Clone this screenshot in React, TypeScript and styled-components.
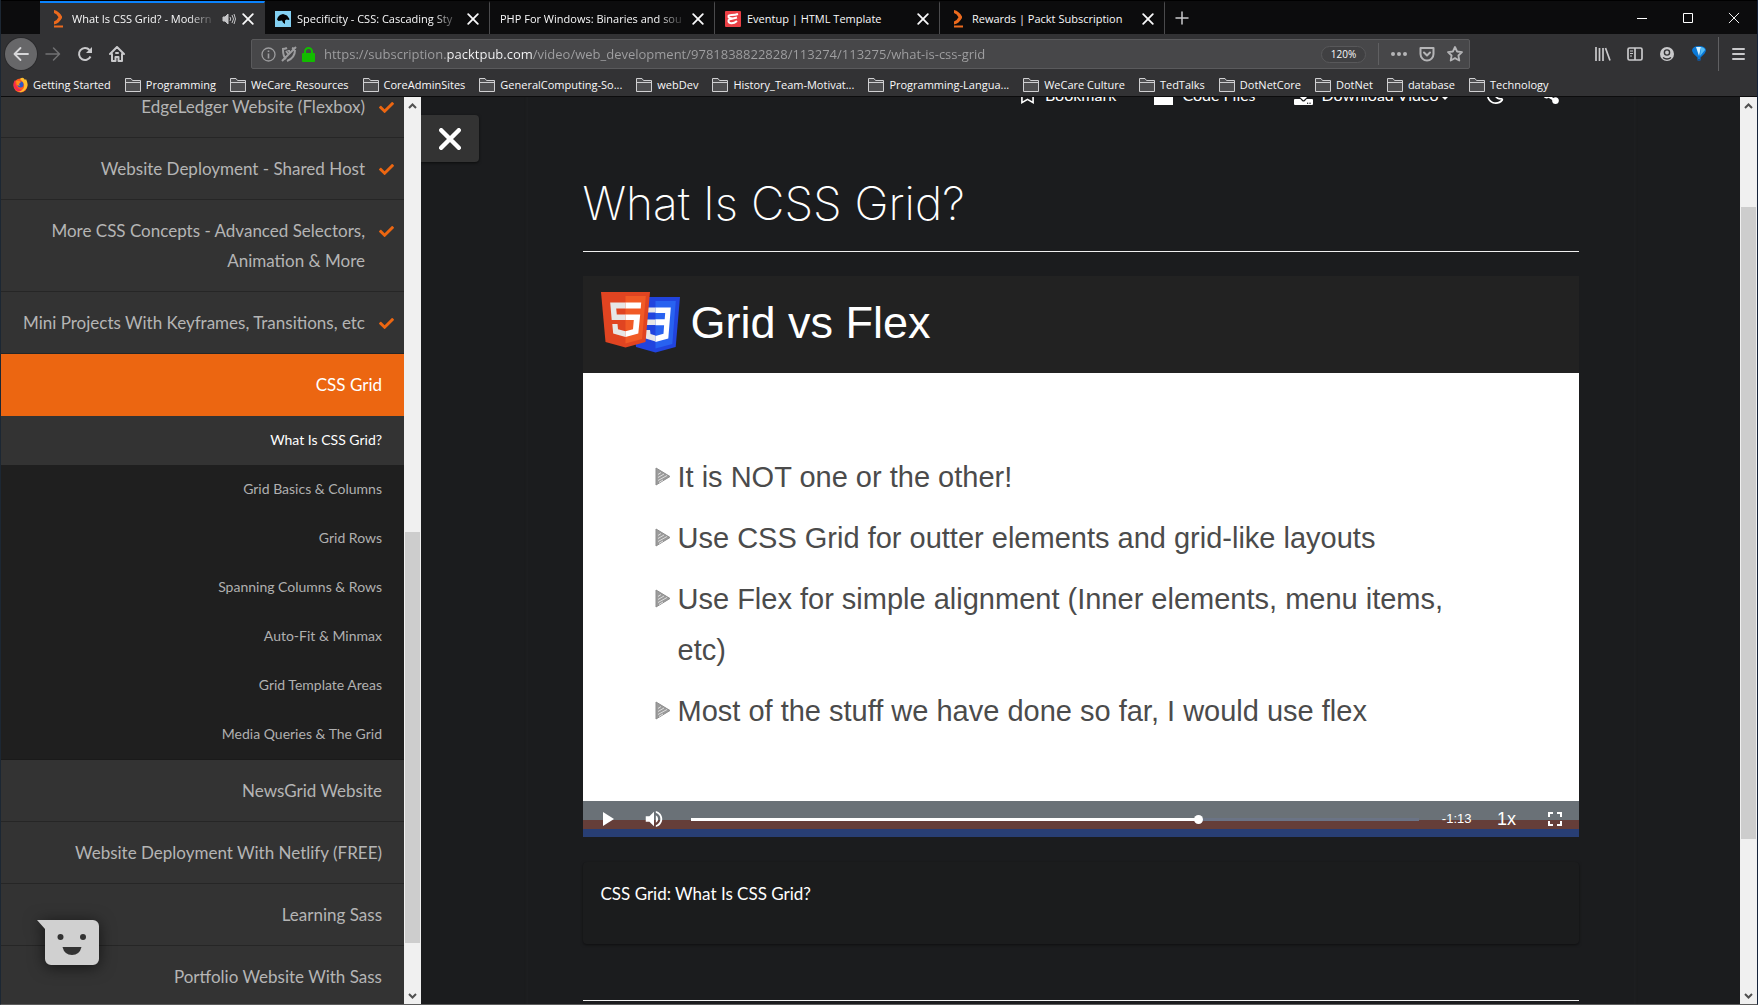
import React from "react";
import styled, { createGlobalStyle, css } from "styled-components";
import { FaCheck, FaDownload, FaRegBookmark, FaRegMoon, FaShareAlt } from "react-icons/fa";
import { MdFullscreen, MdPlayArrow, MdVolumeUp } from "react-icons/md";

const ui = `"Open Sans", "Noto Sans", sans-serif`;
const lato = `Lato, "Open Sans", sans-serif`;
const slideFont = `"Liberation Sans", Arial, sans-serif`;

const GlobalStyle = createGlobalStyle`
  *, *::before, *::after { box-sizing: border-box; }
  body { margin: 0; background: #1b1c1e; overflow: hidden; }
  button { border: 0; padding: 0; background: none; color: inherit; font: inherit; cursor: pointer; }
  a { color: inherit; text-decoration: none; }
  svg { display: block; flex: none; }
  ul, ol { list-style: none; margin: 0; padding: 0; }
`;

const Window = styled.div`
  height: 100vh;
  display: flex;
  flex-direction: column;
  overflow: hidden;
  border-left: 1px solid #1c2733;
  border-right: 1px solid #16233a;
  border-bottom: 1px solid #5c5c5c;
  font-family: ${ui};
`;

/* ---------- browser chrome ---------- */

const Chrome = styled.header`
  flex: none;
  background: #323234;
  color: #f9f9fa;
  border-bottom: 1px solid #0c0c0d;
`;

const TabStrip = styled.div`
  display: flex;
  height: 34px;
  padding-left: 39px;
  background: #0c0c0d;
  border-top: 1px solid #000;
`;

const Tab = styled.div<{ $active?: boolean }>`
  flex: 0 1 225px;
  min-width: 0;
  display: flex;
  align-items: center;
  gap: 6px;
  padding: 0 10px;
  border-top: 2px solid ${(p) => (p.$active ? "#0a84ff" : "transparent")};
  border-right: 1px solid ${(p) => (p.$active ? "transparent" : "#4a4a4c")};
  background: ${(p) => (p.$active ? "#323234" : "transparent")};
`;

const TabTitle = styled.span<{ $fade?: boolean }>`
  flex: 1;
  min-width: 0;
  overflow: hidden;
  white-space: nowrap;
  font-size: 11px;
  line-height: 16px;
  ${(p) =>
    p.$fade &&
    css`
      mask-image: linear-gradient(90deg, #000 calc(100% - 28px), transparent);
    `}
`;

const NewTab = styled.button`
  width: 34px;
  display: grid;
  place-items: center;
  color: #c9c9cb;
`;

const WindowButtons = styled.div`
  margin-left: auto;
  display: flex;
`;

const WindowButton = styled.button`
  width: 46px;
  display: grid;
  place-items: center;
  color: #fff;
`;

const NavBar = styled.div`
  display: flex;
  align-items: center;
  height: 40px;
  padding: 0 3px 0 4px;
  color: #bfbfc1;
`;

const BackButton = styled.button`
  width: 32px;
  height: 32px;
  display: grid;
  place-items: center;
  border-radius: 50%;
  background: #676769;
  color: #d7d7d9;
  box-shadow: 0 0 0 1px #2a2a2c;
`;

const NavButton = styled.button<{ $dim?: boolean }>`
  width: 32px;
  height: 32px;
  display: grid;
  place-items: center;
  color: ${(p) => (p.$dim ? "#717173" : "#c9c9cb")};
`;

const UrlBar = styled.div`
  flex: 1;
  min-width: 0;
  height: 30px;
  margin: 0 117px 0 118px;
  display: flex;
  align-items: center;
  padding: 0 0 0 9px;
  border: 1px solid #5a5a5c;
  border-radius: 2px;
  background: #474749;
`;

const UrlIcons = styled.span`
  display: flex;
  align-items: center;
  gap: 5px;
  color: #9c9c9e;
`;

const UrlInput = styled.input`
  flex: 1;
  min-width: 0;
  margin-left: 9px;
  padding: 0;
  border: 0;
  outline: 0;
  color: #a0a0a2;
  font-family: ${ui};
  font-size: 13px;
  line-height: 20px;
  background: linear-gradient(90deg, #a0a0a2 122px, #f9f9fa 122px 209px, #a0a0a2 209px);
  background-clip: text;
  -webkit-text-fill-color: transparent;
`;

const ZoomPill = styled.button`
  height: 17px;
  width: 45px;
  border: 1px solid #58585a;
  border-radius: 9px;
  background: #404042;
  color: #f9f9fa;
  font-size: 10px;
  line-height: 15px;
`;

const Divider = styled.span<{ $tall?: boolean }>`
  width: 1px;
  height: ${(p) => (p.$tall ? 34 : 22)}px;
  margin: ${(p) => (p.$tall ? "0 3px" : "0 6px 0 12px")};
  background: #606062;
`;

const UrlAction = styled.button`
  width: 28px;
  height: 28px;
  display: grid;
  place-items: center;
  color: #b5b5b7;
`;

const BookmarksBar = styled.ul`
  display: flex;
  align-items: center;
  gap: 14px;
  height: 22px;
  padding-left: 12px;
  white-space: nowrap;
`;

const BookmarkLink = styled.a`
  display: flex;
  align-items: center;
  gap: 5px;
  font-size: 11px;
  line-height: 16px;
`;

/* ---------- page ---------- */

const Page = styled.div`
  flex: 1;
  min-height: 0;
  display: flex;
  position: relative;
  background: #1b1c1e;
  font-family: ${lato};
`;

const Sidebar = styled.nav`
  flex: none;
  width: 403px;
  overflow: hidden;
  background: #333333;
`;

const Sections = styled.ul`
  margin-top: -21px;
`;

const Section = styled.a<{ $active?: boolean }>`
  display: flex;
  justify-content: flex-end;
  padding: 16px 10px 15px 10px;
  border-bottom: 1px solid ${(p) => (p.$active ? "#eb6611" : "#262626")};
  background: ${(p) => (p.$active ? "#ec6611" : "transparent")};
  color: ${(p) => (p.$active ? "#fff" : "#b5b5b5")};
  font-size: 17px;
  line-height: 30px;
  text-align: right;
`;

const SectionMark = styled.span<{ $done?: boolean }>`
  flex: none;
  width: ${(p) => (p.$done ? 29 : 12)}px;
  padding: 8px 0 0 ${(p) => (p.$done ? 14 : 0)}px;
  color: #ec6611;
`;

const Lessons = styled.ul`
  border-bottom: 1px solid #1a1a1a;
  background: #1f1f1f;
`;

const Lesson = styled.a<{ $active?: boolean }>`
  display: block;
  padding: 13px 22px 14px;
  background: ${(p) => (p.$active ? "#333333" : "transparent")};
  color: ${(p) => (p.$active ? "#fff" : "#b0b0b0")};
  font-size: 14px;
  line-height: 22px;
  text-align: right;
`;

const Scrollbar = styled.div`
  flex: none;
  width: 17px;
  display: flex;
  flex-direction: column;
  background: #f0f0f0;
`;

const ScrollButton = styled.button`
  height: 17px;
  display: grid;
  place-items: center;
  color: #505050;
`;

const ScrollSpace = styled.div<{ $share: number; $thumb?: boolean }>`
  flex: ${(p) => p.$share} 1 0;
  margin: 0 1px;
  background: ${(p) => (p.$thumb ? "#cdcdcd" : "transparent")};
`;

const Main = styled.main`
  flex: 1;
  min-width: 0;
  position: relative;
  overflow: hidden;
  color: #fff;
`;

const CloseButton = styled.button`
  position: absolute;
  left: 0;
  top: 18px;
  width: 58px;
  height: 47px;
  display: grid;
  place-items: center;
  border-radius: 0 4px 4px 0;
  background: #333333;
  box-shadow: 0 1px 3px rgba(0, 0, 0, 0.6);
`;

const Article = styled.article`
  max-width: 1106px;
  height: 1200px;
  margin: -18px auto 0;
  padding: 0 55px;
  box-shadow: 0 0 2px 1px #202123;
`;

const Actions = styled.div`
  display: flex;
  justify-content: flex-end;
  padding-right: 19px;
  font-size: 16px;
  line-height: 30px;
`;

const Action = styled.button<{ $gap: number }>`
  display: flex;
  align-items: center;
  gap: 9px;
  height: 32px;
  margin-left: ${(p) => p.$gap}px;
  line-height: 30px;
`;

const Caret = styled.span`
  margin: 6px 0 0 -6px;
  border: 3px solid transparent;
  border-top-color: #fff;
  border-bottom: 0;
`;

const Title = styled.h1`
  margin: 64px 0 20px;
  font-family: Inter, "Open Sans", sans-serif;
  font-size: 46px;
  font-weight: 200;
  line-height: 56px;
`;

const Rule = styled.hr`
  margin: 0;
  border: 0;
  border-top: 1px solid #f0f0f0;
`;

const Player = styled.section`
  margin-top: 24px;
  display: flex;
  flex-direction: column;
  background: #fff;
  aspect-ratio: 996 / 561;
  font-family: ${slideFont};
`;

const SlideHead = styled.header`
  display: flex;
  align-items: center;
  gap: 10px;
  height: 97px;
  padding: 0 18px 3px;
  background: #222222;
`;

const SlideTitle = styled.h2`
  margin: 0;
  font-size: 45px;
  font-weight: 400;
  line-height: 52px;
`;

const Points = styled.ul`
  flex: 1;
  display: flex;
  flex-direction: column;
  gap: 10px;
  padding: 79px 130px 0 72px;
  color: #4b4b4b;
`;

const Point = styled.li`
  display: flex;
  gap: 7px;
  font-size: 29px;
  line-height: 51px;
`;

const PointMark = styled.span`
  flex: none;
  padding-top: 15px;
`;

const Controls = styled.div`
  display: flex;
  align-items: center;
  height: 36px;
  padding: 0 11px;
  background: linear-gradient(#6a7177 19px, #653e39 19px 28px, #283e74 28px);
`;

const ControlButton = styled.button`
  width: 26px;
  height: 36px;
  display: grid;
  place-items: center;
  color: #fff;
`;

const VolumeButton = styled(ControlButton)`
  margin: 0 24px 0 21px;
`;

const Seek = styled.input`
  flex: 1;
  min-width: 0;
  height: 12px;
  margin: 0;
  appearance: none;
  background: transparent;
  &::-webkit-slider-runnable-track {
    height: 3px;
    background: linear-gradient(90deg, #fff 70%, #6b7486 70%);
  }
  &::-webkit-slider-thumb {
    appearance: none;
    width: 9px;
    height: 9px;
    margin-top: -3px;
    border-radius: 50%;
    background: #fff;
  }
`;

const Remaining = styled.span`
  margin: 0 17px 0 23px;
  font-size: 13px;
  line-height: 20px;
`;

const RateButton = styled(ControlButton)`
  width: 36px;
  margin-right: 17px;
  font-size: 18px;
`;

const Caption = styled.section`
  margin-top: 25px;
  height: 82px;
  padding: 17px 18px;
  border-radius: 4px;
  background: #1b1c1d;
  box-shadow: 0 1px 3px rgba(0, 0, 0, 0.5);
  font-size: 17px;
  line-height: 30px;
`;

const FootRule = styled(Rule)`
  margin-top: 56px;
`;

const ChatButton = styled.button`
  position: absolute;
  left: 36px;
  bottom: 39px;
  filter: drop-shadow(0 2px 8px rgba(0, 0, 0, 0.6));
`;

/* ---------- drawings ---------- */

const Cross = ({ size, width = 1 }: { size: number; width?: number }) => (
  <svg width={size} height={size} viewBox="0 0 10 10" stroke="currentColor" strokeWidth={width} strokeLinecap="round">
    <path d="M1 1 9 9M9 1 1 9" />
  </svg>
);

const PacktIcon = () => (
  <svg width="16" height="18" viewBox="0 0 16 18" fill="#ec6a1e">
    <path d="M4 0Q9 1 12 6.500V8Q9 13.500 4 14.500V11.500Q7 10.500 8.500 7.300 7 4 4 3Z" />
    <path d="M4 15.500h9v2H4Z" />
  </svg>
);

const MdnIcon = () => (
  <svg width="16" height="16" viewBox="0 0 16 16">
    <rect width="16" height="16" fill="#83d0f2" />
    <path d="M2 8.500 3 6 5 4 8 3l4 1.500L14.500 8 14 9l-2.500-.5-1.500 1V13L8 11.500 7 9.500 3.500 10Z" fill="#000" />
  </svg>
);

const EventIcon = () => (
  <svg width="16" height="16" viewBox="0 0 16 16">
    <rect width="16" height="16" rx="1" fill="#ea3f45" />
    <path d="M13 3C8 5 4 3 3.500 5s2 2.500 4.500 2.500C5 8 3 8.500 3.500 10.500s4.500 3 8.500-.5M8 7.500l4-1" fill="none" stroke="#fff" strokeWidth="2" />
  </svg>
);

const SpeakerIcon = () => (
  <svg width="14" height="14" viewBox="0 0 14 14" fill="none" stroke="#c5c5c7">
    <path d="M1 5h2l3-3v10L3 9H1Z" fill="#c5c5c7" />
    <path d="M8 5q1.500 2 0 4M10 3q3 4 0 8M12 2q3 5 0 10" />
  </svg>
);

const Stroke = ({ d, w = 2, size = 16 }: { d: string; w?: number; size?: number }) => (
  <svg width={size} height={size} viewBox="0 0 16 16" fill="none" stroke="currentColor" strokeWidth={w} strokeLinecap="round" strokeLinejoin="round">
    <path d={d} />
  </svg>
);

const ReloadIcon = () => (
  <svg width="16" height="16" viewBox="0 0 16 16" fill="none" stroke="currentColor" strokeWidth="2">
    <path d="M13.500 10.500A6 6 0 1 1 12.500 4" />
    <path d="M15 1v6H9Z" fill="currentColor" stroke="none" />
  </svg>
);

const HomeIcon = () => (
  <svg width="16" height="16" viewBox="0 0 16 16" fill="none" stroke="currentColor" strokeWidth="2" strokeLinejoin="round" strokeLinecap="round">
    <path d="M1 8 8 1l7 7M3 8v7h3.500v-4h3v4H13V8" />
    <path d="M7 7h2" />
  </svg>
);

const InfoIcon = () => (
  <svg width="15" height="15" viewBox="0 0 15 15" fill="none" stroke="currentColor" strokeWidth="1.300">
    <circle cx="7.500" cy="7.500" r="6.500" />
    <path d="M7.500 6.500v5M7.500 3.500v1.500" strokeWidth="1.600" />
  </svg>
);

const ShieldOffIcon = () => (
  <svg width="16" height="16" viewBox="0 0 16 16" fill="none" stroke="currentColor" strokeWidth="2">
    <path d="M1 3q3 0 5-1M2 4q0 6 3 9M6 15q8-3 8-11M1 15 15 1M11 2l3 1M5 5l3 4" />
    <path d="M6 4l3 4V4Z" fill="currentColor" stroke="none" />
  </svg>
);

const LockIcon = () => (
  <svg width="13" height="15" viewBox="0 0 13 15">
    <path d="M3 7V4.500a3.500 3.500 0 0 1 7 0V7" fill="none" stroke="#12bc00" strokeWidth="2" />
    <rect y="6" width="13" height="9" rx="1" fill="#12bc00" />
  </svg>
);

const PocketIcon = () => (
  <svg width="16" height="15" viewBox="0 0 16 15" fill="none" stroke="currentColor" strokeWidth="2" strokeLinecap="round" strokeLinejoin="round">
    <path d="M1.500 1h13v6a6.500 6.500 0 0 1-13 0Z" />
    <path d="m5 5.500 3 3 3-3" />
  </svg>
);

const LibraryIcon = () => (
  <svg width="16" height="14" viewBox="0 0 16 14" fill="none" stroke="currentColor" strokeWidth="1.700">
    <path d="M1 0v14M4.500 1v13M8 1v13M10.500 1l4.500 12.500" />
  </svg>
);

const SidebarIcon = () => (
  <svg width="16" height="14" viewBox="0 0 16 14" fill="none" stroke="currentColor" strokeWidth="1.700">
    <rect x="1" y="1" width="14" height="12" rx="1.500" />
    <path d="M8 1v12" />
    <path d="M3 4h3M3 6.500h3M3 9h2" strokeWidth="1" />
  </svg>
);

const AccountIcon = () => (
  <svg width="14" height="14" viewBox="0 0 14 14">
    <circle cx="7" cy="7" r="7" fill="currentColor" />
    <circle cx="7" cy="5.500" r="2.600" fill="none" stroke="#323234" strokeWidth="1.400" />
    <path d="M3 10.500Q7 13.500 11 10.500" fill="none" stroke="#323234" strokeWidth="1.500" />
  </svg>
);

const BalloonIcon = () => (
  <svg width="14" height="16" viewBox="0 0 14 16">
    <path d="M0 4Q1 0 7 0t7 4q0 3-5.500 7.500V14h-3v-2.500Q0 7 0 4Z" fill="#0a78d6" />
    <path d="M4 1h5L7 10Z" fill="#d5f1ff" />
    <path d="M9 1q4 1 4 3L8 10Z" fill="#54bdf7" />
    <path d="M5.500 13h3v2h-3Z" fill="#18508b" />
  </svg>
);

const FolderIcon = () => (
  <svg width="16" height="14" viewBox="0 0 16 14" fill="#4e4e50" stroke="#d0d0d2">
    <path d="M.5 13.500V.5H6L7.500 2.500h8v11Z" />
    <path d="M.5 4.500h15" />
  </svg>
);

const FirefoxIcon = () => (
  <svg width="15" height="16" viewBox="0 0 15 16">
    <circle cx="7.500" cy="8.500" r="7" fill="#ff5a1f" />
    <path d="M7 2q3-3 5 1l1-1q3 6 0 10Q9 17 5 14q7-1 6-6Q10 4 7 2Z" fill="#ffbd2e" />
    <path d="M2 12q-3-5 0-9 0 8 7 10-3 3-7-1Z" fill="#f5274f" />
    <circle cx="7.500" cy="7.500" r="3" fill="#2c56c8" />
    <path d="M3 4q3-1 5 1L6 7 7 9 4 8Z" fill="#ff8a1c" />
  </svg>
);

const Chevron = ({ up }: { up?: boolean }) => (
  <svg width="9" height="6" viewBox="0 0 9 6" fill="none" stroke="currentColor" strokeWidth="2">
    <path d={up ? "M1 5 4.500 1.500 8 5" : "M1 1 4.500 4.500 8 1"} />
  </svg>
);

const HtmlCssLogo = () => (
  <svg width="80" height="62" viewBox="0 0 80 62">
    <path d="M30 5h49l-4.300 50L54.500 60.500 35 55Z" fill="#2144de" />
    <path d="M54.500 9h20.300l-3.500 43-16.800 4.500Z" fill="#2862f0" />
    <path d="M54.500 15.500H42v5h12.500ZM54.500 27.500H45l.5 5.500h9ZM54.500 43.500l-5-1.500-.5-4h-5l.7 8.500 9.800 3Z" fill="#e6e6e6" />
    <path d="M54.500 15.500h15.300L67.300 46.500l-12.800 3.500v-6l8-2.300.6-8.500h-8.600v-6H63.700l.5-6.200h-9.700Z" fill="#fff" />
    <path d="M0 0h49l-4.500 50L24.500 55.500 4.500 50Z" fill="#e04421" />
    <path d="M24.500 4h20.300L41 47l-16.500 4.500Z" fill="#f15a26" />
    <path d="M24.500 10.500H9.200L10.700 28h13.800v-5.500h-8.700l-.6-6h9.300ZM24.500 39.300l-7.500-2-.5-5.300h-5.200l.9 9.500 12.300 3.500Z" fill="#e6e6e6" />
    <path d="M24.500 10.500h15.700l-.5 6H24.500ZM24.500 22.500h14.700L37.300 41.500l-12.800 3.500v-5.700l7.500-2 .8-9.300h-8.300Z" fill="#fff" />
  </svg>
);

const PointIcon = () => (
  <svg width="16" height="19" viewBox="0 0 16 19">
    <path d="M1 1 15 9.500 1 18Z" fill="#9b9b9b" stroke="#8d8d8d" strokeLinejoin="round" />
    <path d="M3 7.500 6 5.500M3 10.500l6-3.500M3 13.500l9-5M4 15.500l4-2.500" stroke="#dedede" fill="none" />
  </svg>
);

const ChatIcon = () => (
  <svg width="62" height="45" viewBox="0 0 62 45">
    <path d="M0 0h56a6 6 0 0 1 6 6v33a6 6 0 0 1-6 6H14a6 6 0 0 1-6-6V9Z" fill="#d0d0d0" />
    <circle cx="23.500" cy="17" r="3" fill="#333" />
    <circle cx="46" cy="17" r="3" fill="#333" />
    <path d="M25.500 27h19q-2 8-9.500 8t-9.500-8Z" fill="#333" />
  </svg>
);

/* ---------- data ---------- */

const tabs = [
  { title: "What Is CSS Grid? - Modern", icon: <PacktIcon />, active: true, sound: true, fade: true },
  { title: "Specificity - CSS: Cascading Sty", icon: <MdnIcon />, fade: true },
  { title: "PHP For Windows: Binaries and sou", fade: true },
  { title: "Eventup | HTML Template", icon: <EventIcon /> },
  { title: "Rewards | Packt Subscription", icon: <PacktIcon /> },
];

const bookmarks = [
  "Programming",
  "WeCare_Resources",
  "CoreAdminSites",
  "GeneralComputing-So...",
  "webDev",
  "History_Team-Motivat...",
  "Programming-Langua...",
  "WeCare Culture",
  "TedTalks",
  "DotNetCore",
  "DotNet",
  "database",
  "Technology",
];

const sections = [
  { title: "EdgeLedger Website (Flexbox)", done: true },
  { title: "Website Deployment - Shared Host", done: true },
  { title: "More CSS Concepts - Advanced Selectors, Animation & More", done: true },
  { title: "Mini Projects With Keyframes, Transitions, etc", done: true },
  {
    title: "CSS Grid",
    lessons: [
      "What Is CSS Grid?",
      "Grid Basics & Columns",
      "Grid Rows",
      "Spanning Columns & Rows",
      "Auto-Fit & Minmax",
      "Grid Template Areas",
      "Media Queries & The Grid",
    ],
  },
  { title: "NewsGrid Website" },
  { title: "Website Deployment With Netlify (FREE)" },
  { title: "Learning Sass" },
  { title: "Portfolio Website With Sass" },
];

const points = [
  "It is NOT one or the other!",
  "Use CSS Grid for outter elements and grid-like layouts",
  "Use Flex for simple alignment (Inner elements, menu items, etc)",
  "Most of the stuff we have done so far, I would use flex",
];

const PageScrollbar = ({ shares }: { shares: [number, number, number] }) => (
  <Scrollbar>
    <ScrollButton aria-label="Scroll up"><Chevron up /></ScrollButton>
    <ScrollSpace $share={shares[0]} />
    <ScrollSpace $share={shares[1]} $thumb />
    <ScrollSpace $share={shares[2]} />
    <ScrollButton aria-label="Scroll down"><Chevron /></ScrollButton>
  </Scrollbar>
);

export default function App() {
  return (
    <Window>
      <GlobalStyle />
      <Chrome>
        <TabStrip>
          {tabs.map((t) => (
            <Tab key={t.title} $active={t.active}>
              {t.icon}
              <TabTitle $fade={t.fade}>{t.title}</TabTitle>
              {t.sound && <SpeakerIcon />}
              <button aria-label="Close tab"><Cross size={12} width={1.500} /></button>
            </Tab>
          ))}
          <NewTab aria-label="New tab"><Stroke d="M8 2v12M2 8h12" w={1.500} /></NewTab>
          <WindowButtons>
            <WindowButton aria-label="Minimize">
              <svg width="10" height="10" stroke="currentColor"><path d="M0 5.500h10" /></svg>
            </WindowButton>
            <WindowButton aria-label="Maximize">
              <svg width="10" height="10" fill="none" stroke="currentColor"><path d="M.5.5h9v9h-9Z" /></svg>
            </WindowButton>
            <WindowButton aria-label="Close window"><Cross size={12} width={0.800} /></WindowButton>
          </WindowButtons>
        </TabStrip>
        <NavBar>
          <BackButton aria-label="Back"><Stroke d="M15 8H1.500M7.500 2 1.500 8l6 6" w={1.800} /></BackButton>
          <NavButton aria-label="Forward" $dim><Stroke d="M1 8h13.500M8.500 2l6 6-6 6" w={1.500} /></NavButton>
          <NavButton aria-label="Reload"><ReloadIcon /></NavButton>
          <NavButton aria-label="Home"><HomeIcon /></NavButton>
          <UrlBar>
            <UrlIcons><InfoIcon /><ShieldOffIcon /><LockIcon /></UrlIcons>
            <UrlInput
              aria-label="Address"
              defaultValue="https://subscription.packtpub.com/video/web_development/9781838822828/113274/113275/what-is-css-grid"
            />
            <ZoomPill>120%</ZoomPill>
            <Divider />
            <UrlAction aria-label="Page actions">
              <svg width="16" height="4" fill="currentColor"><circle cx="2" cy="2" r="2" /><circle cx="8" cy="2" r="2" /><circle cx="14" cy="2" r="2" /></svg>
            </UrlAction>
            <UrlAction aria-label="Save to Pocket"><PocketIcon /></UrlAction>
            <UrlAction aria-label="Bookmark this page">
              <Stroke d="m8 1 2.100 4.500 4.900.6-3.600 3.400.9 5L8 12.100 3.700 14.500l.9-5L1 6.100l4.900-.6Z" w={1.800} />
            </UrlAction>
          </UrlBar>
          <NavButton aria-label="Library"><LibraryIcon /></NavButton>
          <NavButton aria-label="Sidebars"><SidebarIcon /></NavButton>
          <NavButton aria-label="Account"><AccountIcon /></NavButton>
          <NavButton aria-label="Balloon"><BalloonIcon /></NavButton>
          <Divider $tall />
          <NavButton aria-label="Menu"><Stroke d="M3 3h11M3 8h11M3 13h11" /></NavButton>
        </NavBar>
        <BookmarksBar>
          <li><BookmarkLink href="#"><FirefoxIcon />Getting Started</BookmarkLink></li>
          {bookmarks.map((b) => (
            <li key={b}><BookmarkLink href="#"><FolderIcon />{b}</BookmarkLink></li>
          ))}
        </BookmarksBar>
      </Chrome>
      <Page>
        <Sidebar>
          <Sections>
            {sections.map((s) => (
              <li key={s.title}>
                <Section href="#" $active={!!s.lessons}>
                  {s.title}
                  <SectionMark $done={s.done}>{s.done && <FaCheck size={15} />}</SectionMark>
                </Section>
                {s.lessons && (
                  <Lessons>
                    {s.lessons.map((l, i) => (
                      <li key={l}><Lesson href="#" $active={i === 0}>{l}</Lesson></li>
                    ))}
                  </Lessons>
                )}
              </li>
            ))}
          </Sections>
        </Sidebar>
        <PageScrollbar shares={[418, 411, 44]} />
        <Main>
          <Article>
            <Actions>
              <Action $gap={0}><FaRegBookmark size={17} />Bookmark</Action>
              <Action $gap={38}>
                <svg width="19" height="19" fill="#fff"><path d="M0 0h19v19H0Z" /></svg>
                Code Files
              </Action>
              <Action $gap={38}><FaDownload size={19} />Download Video<Caret /></Action>
              <Action $gap={38} aria-label="Dark mode"><FaRegMoon size={18} /></Action>
              <Action $gap={38} aria-label="Share"><FaShareAlt size={18} /></Action>
            </Actions>
            <Title>What Is CSS Grid?</Title>
            <Rule />
            <Player>
              <SlideHead>
                <HtmlCssLogo />
                <SlideTitle>Grid vs Flex</SlideTitle>
              </SlideHead>
              <Points>
                {points.map((p) => (
                  <Point key={p}>
                    <PointMark><PointIcon /></PointMark>
                    {p}
                  </Point>
                ))}
              </Points>
              <Controls>
                <ControlButton aria-label="Play"><MdPlayArrow size={24} /></ControlButton>
                <VolumeButton aria-label="Mute"><MdVolumeUp size={22} /></VolumeButton>
                <Seek type="range" aria-label="Seek" min={0} max={100} defaultValue={70} />
                <Remaining>-1:13</Remaining>
                <RateButton>1x</RateButton>
                <ControlButton aria-label="Fullscreen"><MdFullscreen size={24} /></ControlButton>
              </Controls>
            </Player>
            <Caption>CSS Grid: What Is CSS Grid?</Caption>
            <FootRule />
          </Article>
          <CloseButton aria-label="Close menu"><Cross size={22} width={2} /></CloseButton>
        </Main>
        <PageScrollbar shares={[93, 632, 148]} />
        <ChatButton aria-label="Open chat"><ChatIcon /></ChatButton>
      </Page>
    </Window>
  );
}
